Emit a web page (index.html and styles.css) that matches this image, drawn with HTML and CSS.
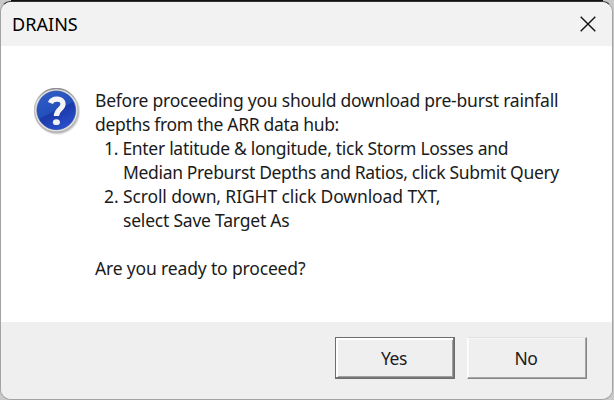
FILE: index.html
```html
<!DOCTYPE html>
<html lang="en">
<head>
  <meta charset="UTF-8">
  <meta name="viewport" content="width=device-width, initial-scale=1.0">
  <title>DRAINS</title>
  <link rel="stylesheet" href="styles.css">
</head>
<body>
  <div class="dialog" role="dialog" aria-labelledby="dialog-title">
    <div class="title-bar">
      <span class="title" id="dialog-title">DRAINS</span>
      <button class="close" aria-label="Close">
        <svg width="16" height="16" viewBox="0 0 16 16">
          <path d="M0.7 0.7 L15.3 15.3 M15.3 0.7 L0.7 15.3" fill="none" stroke="#111" stroke-width="1.4"/>
        </svg>
      </button>
    </div>

    <div class="content">
      <svg class="icon" width="49" height="48" viewBox="0 0 49 48">
        <defs>
          <linearGradient id="rim" x1="0" y1="0" x2="0" y2="1">
            <stop offset="0" stop-color="#8d8d8d"/>
            <stop offset="0.3" stop-color="#c4c4c4"/>
            <stop offset="1" stop-color="#b2b2b2"/>
          </linearGradient>
          <linearGradient id="ball" x1="0.2" y1="0" x2="0.7" y2="1">
            <stop offset="0" stop-color="#2f5cc4"/>
            <stop offset="0.5" stop-color="#2450bc"/>
            <stop offset="0.54" stop-color="#1b3aa8"/>
            <stop offset="1" stop-color="#2b50ce"/>
          </linearGradient>
          <radialGradient id="shadow">
            <stop offset="0.86" stop-color="#777" stop-opacity="0.6"/>
            <stop offset="1" stop-color="#777" stop-opacity="0"/>
          </radialGradient>
        </defs>
        <circle cx="23.3" cy="23.8" r="23.4" fill="url(#shadow)"/>
        <circle cx="22.3" cy="22.3" r="21.8" fill="#e4e4e4" stroke="url(#rim)" stroke-width="1.4"/>
        <circle cx="22.3" cy="22.3" r="19.4" fill="url(#ball)" stroke="#2644a0" stroke-width="0.6"/>
        <path d="M16.4 15 C18.4 9.8 29 9.6 29 16 C29 21.2 22.4 21.2 22.4 28" fill="none" stroke="#f5f5f7" stroke-width="5.2"/>
        <ellipse cx="22.4" cy="34.2" rx="3.5" ry="2.9" fill="#f1f1f5"/>
      </svg>
      <div class="message">
        <div class="line first">Before proceeding you should download pre-burst rainfall</div>
        <div class="line second">depths from the ARR data hub:</div>
        <div class="line item enter">1. Enter latitude &amp; longitude, tick Storm Losses and</div>
        <div class="line sub median">Median Preburst Depths and Ratios, click Submit Query</div>
        <div class="line item scroll">2. Scroll down, RIGHT click Download TXT,</div>
        <div class="line sub select">select Save Target As</div>
        <div class="line question">Are you ready to proceed?</div>
      </div>
    </div>

    <div class="footer">
      <button class="btn btn-default">Yes</button>
      <button class="btn">No</button>
    </div>
  </div>
</body>
</html>
```
FILE: styles.css
```css
* {
  box-sizing: border-box;
}
body {
  margin: 0;
  padding: 1px 1px 0 0;
  height: 400px;
  overflow: hidden;
  background: linear-gradient(#111, #111) 11px 0 / 592px 2px no-repeat #c9c9c9;
  font-family: "Noto Sans", "Open Sans", sans-serif;
  color: #1b1b1b;
}
.dialog {
  display: flex;
  flex-direction: column;
  width: 613px;
  height: 399px;
  border: 1px solid #a3a3a3;
  border-top-color: #333;
  border-radius: 11px;
  background-color: #fff;
  overflow: hidden;
}
.title-bar {
  display: flex;
  align-items: center;
  justify-content: space-between;
  height: 44px;
  padding: 0 16px 0 11px;
  background-color: #f2f2f2;
}
.title {
  font-size: 18px;
  letter-spacing: 0.05px;
  color: #000;
}
.close {
  display: flex;
  padding: 0;
  border: none;
  background: none;
}
.content {
  display: flex;
  flex: 1;
  padding: 42px 0 0 34px;
}
.icon {
  flex: none;
  margin-left: -1px;
}
.message {
  margin-left: 12px;
}
.line {
  font-size: 17.5px;
  line-height: 24px;
  white-space: nowrap;
}
.item {
  padding-left: 9px;
}
.sub {
  padding-left: 28px;
}
.first {
  letter-spacing: -0.23px;
}
.second {
  letter-spacing: -0.32px;
}
.enter {
  letter-spacing: -0.29px;
}
.median {
  letter-spacing: -0.34px;
}
.scroll {
  letter-spacing: -0.11px;
}
.select {
  letter-spacing: -0.21px;
}
.question {
  margin-top: 24px;
  letter-spacing: -0.16px;
}
.footer {
  display: flex;
  justify-content: flex-end;
  gap: 12px;
  height: 77px;
  padding: 15px 25px 0 0;
  background-color: #efefef;
}
.btn {
  width: 120px;
  height: 42px;
  padding: 0 2px 0 0;
  border: 1px solid;
  border-color: #e2e2e2 #858585 #858585 #fff;
  box-shadow: inset -1px -1px #a6a6a6, inset 1px 1px #f8f8f8;
  background-color: #efefef;
  font-family: inherit;
  font-size: 17.5px;
  letter-spacing: -0.4px;
  color: #1b1b1b;
}
.btn-default {
  border-color: #6d6d6d;
  box-shadow: inset -1px -1px #777, inset 2px 2px #fff, inset -2px -2px #a0a0a0;
}
```
